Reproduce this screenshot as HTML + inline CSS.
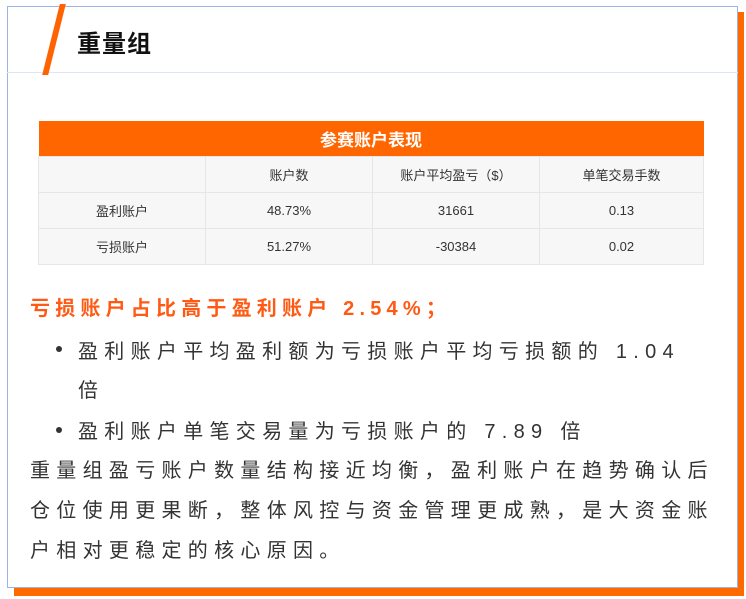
<!DOCTYPE html>
<html><head><meta charset="utf-8"><style>
body{margin:0;width:746px;height:599px;background:#fff;position:relative;overflow:hidden;font-family:"Liberation Sans","Noto Sans CJK SC",sans-serif;}
.shadow{position:absolute;left:14px;top:12px;width:730px;height:584px;background:#ff6a00;}
.card{position:absolute;left:7px;top:6px;width:729px;height:580px;background:#fff;border:1.5px solid #9db3e8;}
.hline{position:absolute;left:7px;top:72px;width:731px;height:1px;background:#dde5f6;}
.slash{position:absolute;left:51px;top:4px;width:6px;height:71px;background:#ff6200;transform:skewX(-14deg);}
.title{position:absolute;left:77px;top:24px;font-size:24px;font-weight:bold;color:#111;letter-spacing:1px;}
table{position:absolute;left:38px;top:121px;width:666px;border-collapse:collapse;font-size:13px;color:#333;}
td{background:#f7f7f7;border:1px solid #e6e6e6;text-align:center;height:35px;padding:0;}
th{background:#ff6600;color:#fff;height:33px;font-size:17px;font-weight:bold;}
.t{position:absolute;font-size:20px;letter-spacing:6.3px;color:#333;white-space:nowrap;}
.red{color:#ff5a14;font-weight:bold;letter-spacing:5.2px;}
.dot{position:absolute;width:6px;height:6px;border-radius:50%;background:#333;}
</style></head><body>
<div class="shadow"></div>
<div class="card"></div>
<div class="hline"></div>
<div class="slash"></div>
<div class="title">重量组</div>
<table>
<tr><th colspan="4">参赛账户表现</th></tr>
<tr><td style="width:166px"></td><td style="width:166px">账户数</td><td style="width:166px">账户平均盈亏（$）</td><td>单笔交易手数</td></tr>
<tr><td>盈利账户</td><td>48.73%</td><td>31661</td><td>0.13</td></tr>
<tr><td>亏损账户</td><td>51.27%</td><td>-30384</td><td>0.02</td></tr>
</table>
<div class="t red" style="left:30px;top:292px;">亏损账户占比高于盈利账户 2.54%；</div>
<div class="dot" style="left:56px;top:346px"></div>
<div class="t" style="left:78px;top:335px;">盈利账户平均盈利额为亏损账户平均亏损额的 1.04</div>
<div class="t" style="left:78px;top:374px;">倍</div>
<div class="dot" style="left:56px;top:427px"></div>
<div class="t" style="left:78px;top:415px;">盈利账户单笔交易量为亏损账户的 7.89 倍</div>
<div class="t" style="left:30px;top:454px;">重量组盈亏账户数量结构接近均衡，盈利账户在趋势确认后</div>
<div class="t" style="left:30px;top:494px;">仓位使用更果断，整体风控与资金管理更成熟，是大资金账</div>
<div class="t" style="left:30px;top:534px;">户相对更稳定的核心原因。</div>
</body></html>
